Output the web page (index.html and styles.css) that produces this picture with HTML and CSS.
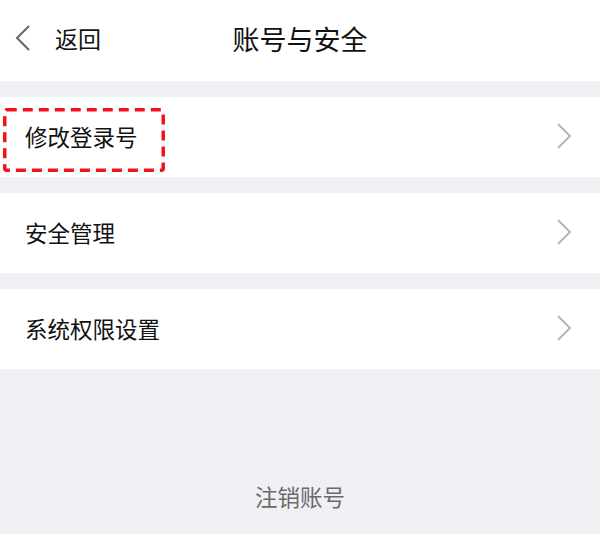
FILE: index.html
```html
<!DOCTYPE html>
<html lang="zh-CN">
<head>
  <meta charset="UTF-8">
  <title>账号与安全</title>
  <link rel="stylesheet" href="styles.css">
</head>
<body>
  <header class="topbar">
    <div class="back">
      <svg class="back-icon" width="16" height="26" viewBox="0 0 16 26">
        <polyline points="14,1 2,13 14,25" fill="none" stroke="#666" stroke-width="2"/>
      </svg>
      <span>返回</span>
    </div>
    <div class="title">账号与安全</div>
  </header>

  <div class="list">
    <div class="row">
      <span class="row-label">修改登录号</span>
      <svg class="arrow" width="16" height="26" viewBox="0 0 16 26">
        <polyline points="2,1 14,13 2,25" fill="none" stroke="#b4b4b4" stroke-width="2"/>
      </svg>
      <!-- highlight box -->
      <svg class="mark" width="162" height="64" viewBox="0 0 162 64">
        <rect x="1.75" y="1.75" width="158.5" height="60.5" rx="2" fill="none" stroke="#f2121a" stroke-width="3.5" stroke-dasharray="10 6"/>
      </svg>
    </div>
    <div class="row">
      <span class="row-label">安全管理</span>
      <svg class="arrow" width="16" height="26" viewBox="0 0 16 26">
        <polyline points="2,1 14,13 2,25" fill="none" stroke="#b4b4b4" stroke-width="2"/>
      </svg>
    </div>
    <div class="row">
      <span class="row-label">系统权限设置</span>
      <svg class="arrow" width="16" height="26" viewBox="0 0 16 26">
        <polyline points="2,1 14,13 2,25" fill="none" stroke="#b4b4b4" stroke-width="2"/>
      </svg>
    </div>
  </div>

  <div class="logout">注销账号</div>
</body>
</html>
```

FILE: styles.css
```css
body {
  margin: 0;
  background: #efeff4;
  font-family: "Noto Sans CJK SC", "Noto Sans", sans-serif;
  color: #111;
}

.topbar {
  position: relative;
  height: 81px;
  background: #fff;
  display: flex;
  align-items: center;
  justify-content: center;
}

.back {
  position: absolute;
  left: 15px;
  top: 0;
  height: 76px;
  display: flex;
  align-items: center;
  font-size: 23px;
  color: #111;
}

.back-icon {
  margin-right: 24px;
}

.title {
  font-size: 27px;
  margin-bottom: 5px;
}

.list {
  padding-top: 16px;
}

.row {
  position: relative;
  height: 80px;
  background: #fff;
  margin-bottom: 16px;
  display: flex;
  align-items: center;
  justify-content: space-between;
  padding: 0 28px 0 25px;
}

.row-label {
  font-size: 22.5px;
  margin-top: -2px;
}

.arrow {
  margin-top: -2px;
}

.mark {
  position: absolute;
  left: 3px;
  top: 11px;
}

.logout {
  margin-top: 111px;
  text-align: center;
  font-size: 22.5px;
  color: #6a6a6a;
}
```
